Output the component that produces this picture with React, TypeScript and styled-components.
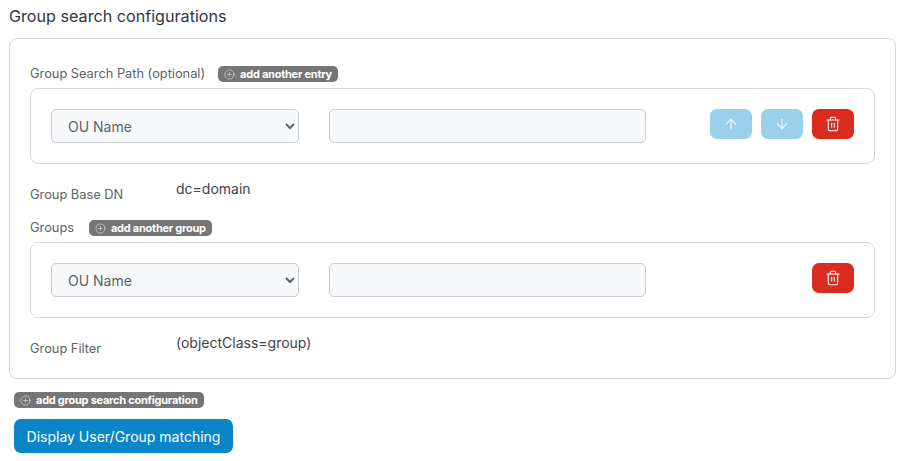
import React from "react";
import styled, { createGlobalStyle } from "styled-components";
import { ArrowUp, ArrowDown, Trash2, CirclePlus } from "lucide-react";

const Global = createGlobalStyle`
  html, body { margin: 0; padding: 0; background: #fff; }
  body { font-family: Inter, "Liberation Sans", sans-serif; color: #3a3f44; }
`;

const Page = styled.div`
  width: 906px;
  height: 461px;
  padding: 6px 10px 0 9px;
  box-sizing: border-box;
  overflow: hidden;
`;

const Heading = styled.h2`
  margin: 0 0 12px;
  font-size: 16.15px;
  line-height: 20px;
  font-weight: 400;
  color: #31373d;
`;

const Panel = styled.section`
  box-sizing: border-box;
  height: 341px;
  border: 1px solid #d4d6d9;
  border-radius: 8px;
  padding: 25px 20px 0;
`;

const LabelRow = styled.div`
  display: flex;
  align-items: center;
  height: 20px;
  margin-bottom: 4px;
`;

const Label = styled.span`
  font-size: 12.8px;
  line-height: 20px;
  color: #5c6369;
`;

const Badge = styled.button<{ $gap?: number }>`
  display: inline-flex;
  align-items: center;
  gap: 5px;
  height: 16px;
  padding: 0 6px;
  margin-left: ${(p) => p.$gap ?? 0}px;
  border: 0;
  border-radius: 5px;
  background: #757575;
  color: #fff;
  font-family: inherit;
  font-size: 11px;
  font-weight: 700;
  letter-spacing: -0.25px;
  svg { color: #d8d8d8; }
`;

const EntryBox = styled.div`
  box-sizing: border-box;
  height: 76px;
  border: 1px solid #d4d6d9;
  border-radius: 8px;
  padding: 20px;
  display: flex;
  align-items: flex-start;
`;

const Select = styled.select`
  box-sizing: border-box;
  width: 248px;
  height: 34px;
  padding: 0 12px;
  border: 1px solid #c9ccd0;
  border-radius: 5px;
  background-color: #f8f9fb;
  color: #5c6369;
  font-family: inherit;
  font-size: 14px;
`;

const Input = styled.input`
  box-sizing: border-box;
  width: 317px;
  height: 34px;
  margin-left: 30px;
  border: 1px solid #c9ccd0;
  border-radius: 5px;
  background: #f8f9fb;
`;

const Actions = styled.div`
  margin-left: auto;
  display: flex;
  gap: 9px;
`;

const IconButton = styled.button<{ $danger?: boolean }>`
  width: 42px;
  height: 30px;
  padding: 0;
  border: 0;
  border-radius: 7px;
  display: flex;
  align-items: center;
  justify-content: center;
  color: #fff;
  background: ${(p) => (p.$danger ? "#d92c1e" : "#9bd0ea")};
  svg { opacity: ${(p) => (p.$danger ? 1 : 0.8)}; }
`;

const InfoRow = styled.div<{ $top: number; $bottom?: number }>`
  display: flex;
  align-items: flex-start;
  margin-top: ${(p) => p.$top}px;
  margin-bottom: ${(p) => p.$bottom ?? 0}px;
  height: 26px;
`;

const InfoLabel = styled(Label)`
  width: 146px;
  padding-top: 6px;
`;

const InfoValue = styled.span`
  font-size: 14px;
  line-height: 20px;
  color: #3f4449;
`;

const Footer = styled.div`
  padding: 13px 0 0 5px;
  display: flex;
  flex-direction: column;
  align-items: flex-start;
  gap: 11px;
`;

const PrimaryButton = styled.button`
  height: 34px;
  width: 219px;
  padding: 0;
  border: 0;
  border-radius: 7px;
  background: #0a85c7;
  color: #fff;
  font-family: inherit;
  font-size: 14px;
`;

const AddIcon = () => <CirclePlus size={11} strokeWidth={1.5} />;

const Trash = () => (
  <IconButton $danger aria-label="delete">
    <Trash2 size={16} strokeWidth={1.6} />
  </IconButton>
);

const Entry = ({ arrows }: { arrows?: boolean }) => (
  <EntryBox>
    <Select defaultValue="OU Name">
      <option>OU Name</option>
    </Select>
    <Input />
    <Actions>
      {arrows && (
        <>
          <IconButton aria-label="up"><ArrowUp size={16} strokeWidth={1.8} /></IconButton>
          <IconButton aria-label="down"><ArrowDown size={16} strokeWidth={1.8} /></IconButton>
        </>
      )}
      <Trash />
    </Actions>
  </EntryBox>
);

export default function App() {
  return (
    <Page>
      <Global />
      <Heading>Group search configurations</Heading>
      <Panel>
        <LabelRow>
          <Label>Group Search Path (optional)</Label>
          <Badge $gap={13}><AddIcon />add another entry</Badge>
        </LabelRow>
        <Entry arrows />
        <InfoRow $top={15} $bottom={13}>
          <InfoLabel>Group Base DN</InfoLabel>
          <InfoValue>dc=domain</InfoValue>
        </InfoRow>
        <LabelRow>
          <Label>Groups</Label>
          <Badge $gap={15}><AddIcon />add another group</Badge>
        </LabelRow>
        <Entry />
        <InfoRow $top={15}>
          <InfoLabel>Group Filter</InfoLabel>
          <InfoValue>(objectClass=group)</InfoValue>
        </InfoRow>
      </Panel>
      <Footer>
        <Badge><AddIcon />add group search configuration</Badge>
        <PrimaryButton>Display User/Group matching</PrimaryButton>
      </Footer>
    </Page>
  );
}
